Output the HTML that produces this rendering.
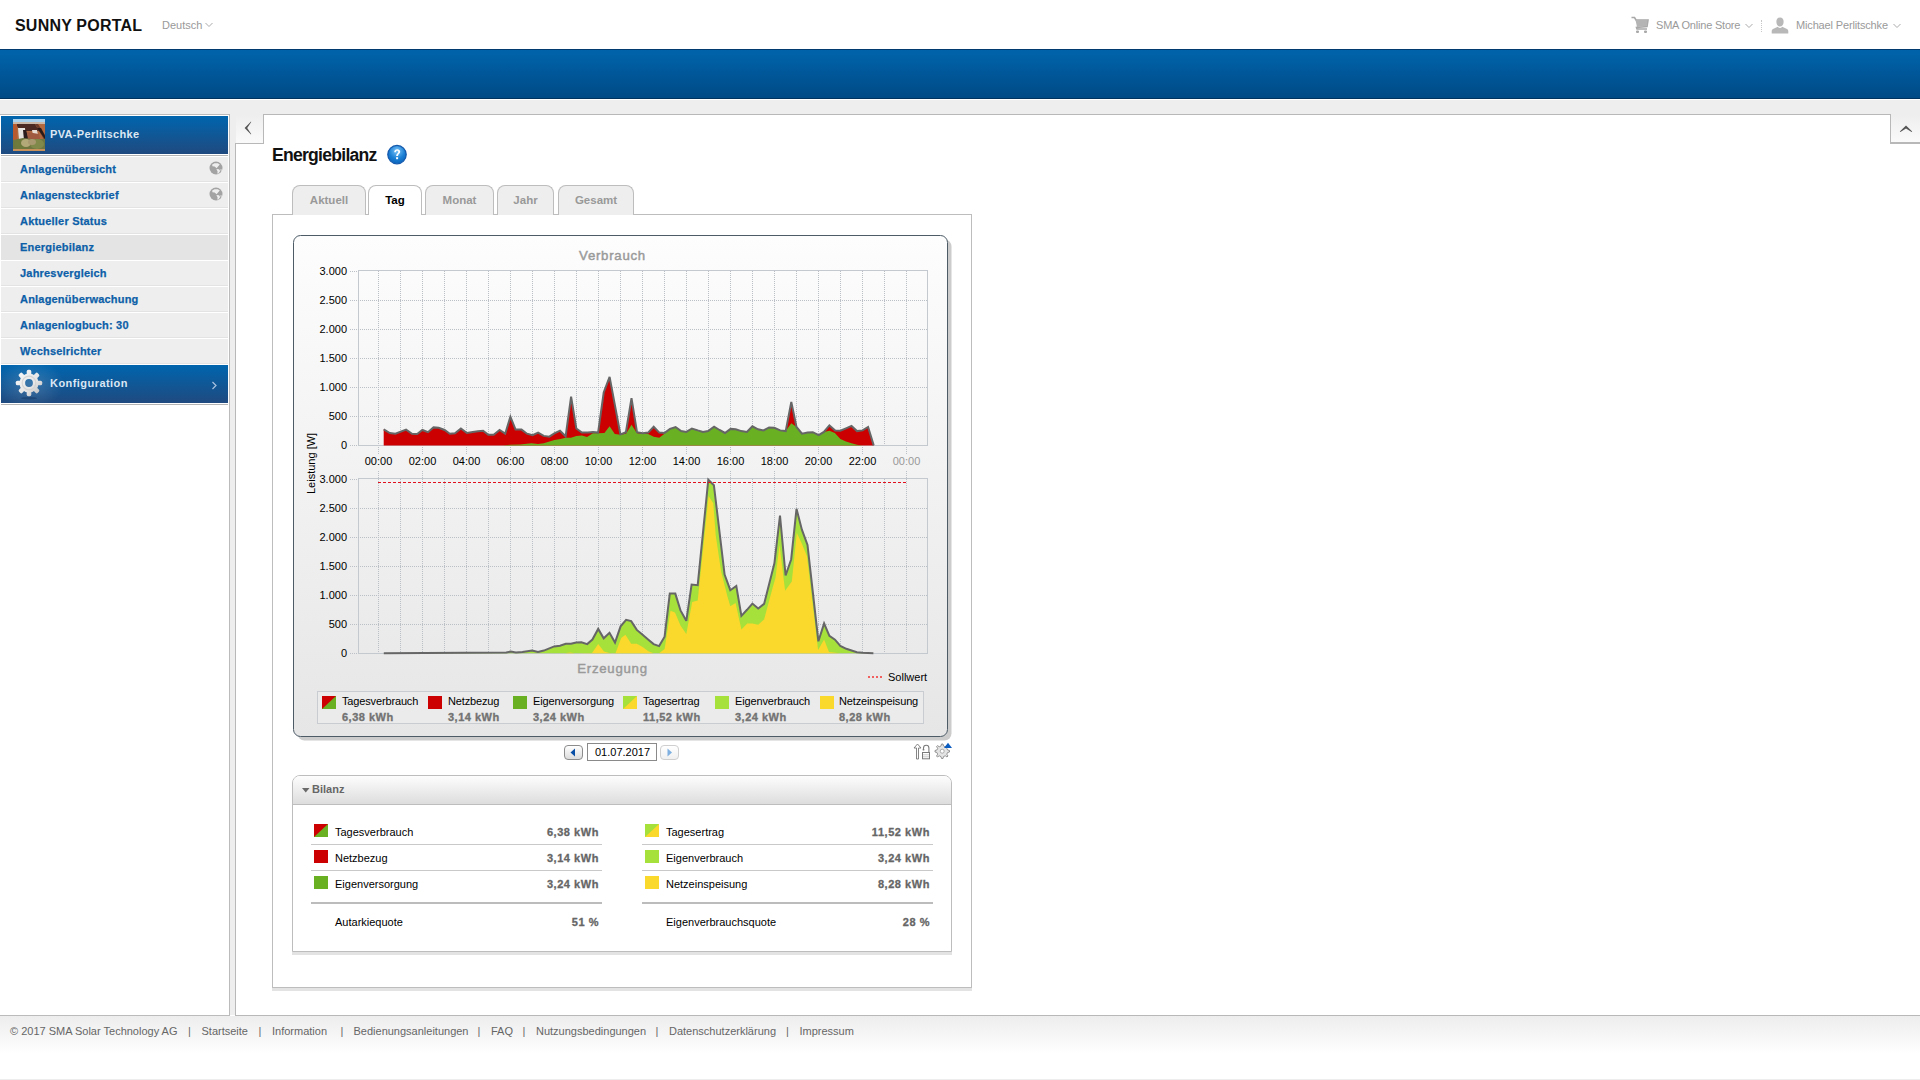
<!DOCTYPE html>
<html><head><meta charset="utf-8">
<style>
*{margin:0;padding:0;box-sizing:border-box}
html,body{width:1920px;height:1080px;overflow:hidden;background:#fff;font-family:"Liberation Sans",sans-serif;font-size:11px;color:#000}
.a{position:absolute;white-space:nowrap}
#hdr{position:absolute;left:0;top:0;width:1920px;height:49px;background:#fff}
#bluebar{position:absolute;left:0;top:49px;width:1920px;height:50px;background:linear-gradient(#0064ab,#004a86);border-top:1px solid #003a6e;border-bottom:1px solid #00325f}
#pagebg{position:absolute;left:0;top:99px;width:1920px;height:916px;background:#eeeeee;border-top:1px solid #fff}
#side{position:absolute;left:0;top:114px;width:230px;height:902px;background:#fff;border:1px solid #bbb;border-left:none}
.sbhead{position:absolute;left:1px;width:227px;background:linear-gradient(#0065ae,#1f4a7f)}
.item{position:absolute;left:1px;width:227px;height:25px;background:#eeeeee;border-bottom:1px solid #e3e3e3}
.item.sel{background:#e4e4e4;border-bottom-color:#e4e4e4}
.itxt{position:absolute;left:19px;top:6px;font-weight:bold;color:#0d5fa8;font-size:11px;letter-spacing:0.2px;-webkit-text-stroke:0.25px #0d5fa8}
.sep{position:absolute;left:1px;width:227px;height:1px;background:#b4b4b4}
#content{position:absolute;left:235px;top:143px;width:1685px;height:873px;background:#fff;border-left:1px solid #b8b8b8;border-top:1px solid #b8b8b8;border-bottom:1px solid #b8b8b8}
#ctop{position:absolute;left:263px;top:114px;width:1628px;height:30px;background:#fff;border:1px solid #b8b8b8;border-bottom:none}
.tabbtn{position:absolute;background:linear-gradient(#eee,#fafafa)}
.tab{position:absolute;top:185px;height:30px;border:1px solid #bdbdbd;border-bottom:none;border-radius:8px 8px 0 0;background:#eeeeee;text-align:center;font-weight:bold;color:#999;font-size:11.5px;padding-top:8px}
.tab.act{background:#fff;color:#000;height:30px}
#footer{position:absolute;left:0;top:1016px;width:1920px;height:64px;background:linear-gradient(#ededed,#fff 38px);border-bottom:1px solid #ededed}
.ft{position:absolute;top:9px;color:#666;font-size:11px}
</style></head>
<body>
<div id="hdr">
  <div class="a" style="left:15px;top:17px;font-size:16px;font-weight:bold;color:#111;letter-spacing:0.2px">SUNNY PORTAL</div>
  <div class="a" style="left:162px;top:19px;font-size:11px;color:#999">Deutsch</div>
  <svg class="a" style="left:205px;top:22px" width="8" height="6"><path d="M0.5 1 L4 4.5 L7.5 1" fill="none" stroke="#aaa" stroke-width="1"/></svg>
  <svg class="a" style="left:1631px;top:16px" width="18" height="18" viewBox="0 0 18 18">
    <path d="M0.5 1.5 L3.5 1.5 L5 4 L17 4 L16 10.5 L5.5 11.5 L6 13 L16 13" fill="none" stroke="#a8a8a8" stroke-width="1.6"/>
    <path d="M4.5 4 L16.5 4 L15.8 10 L6 11 Z" fill="#b4b4b4"/>
    <rect x="5" y="14.5" width="3" height="2.5" rx="1" fill="#a8a8a8"/><rect x="13" y="14.5" width="3" height="2.5" rx="1" fill="#a8a8a8"/>
  </svg>
  <div class="a" style="left:1656px;top:19px;font-size:11px;color:#9a9a9a;letter-spacing:-0.2px">SMA Online Store</div>
  <svg class="a" style="left:1745px;top:23px" width="8" height="6"><path d="M0.5 1 L4 4.5 L7.5 1" fill="none" stroke="#aaa" stroke-width="1"/></svg>
  <div class="a" style="left:1761px;top:20px;width:1px;height:12px;border-left:1px dotted #c8c8c8"></div>
  <svg class="a" style="left:1771px;top:17px" width="18" height="17" viewBox="0 0 18 17">
    <path d="M9 0.5 C11.8 0.5 12.8 2.8 12.6 5.2 C12.4 7.6 11.2 9.6 9 9.6 C6.8 9.6 5.6 7.6 5.4 5.2 C5.2 2.8 6.2 0.5 9 0.5 Z M6.8 9.8 C7.4 10.6 8.2 11 9 11 C9.8 11 10.6 10.6 11.2 9.8 L16 12 C17 12.5 17.3 13.5 17.3 14.5 L17.3 16.5 L0.7 16.5 L0.7 14.5 C0.7 13.5 1 12.5 2 12 Z" fill="#b8b8b8"/>
  </svg>
  <div class="a" style="left:1796px;top:19px;font-size:11px;color:#9a9a9a;letter-spacing:-0.15px">Michael Perlitschke</div>
  <svg class="a" style="left:1893px;top:23px" width="8" height="6"><path d="M0.5 1 L4 4.5 L7.5 1" fill="none" stroke="#aaa" stroke-width="1"/></svg>
</div>
<div id="bluebar"></div>
<div id="pagebg"></div>

<!-- sidebar -->
<div id="side"></div>
<div class="sbhead" style="top:116px;height:38px"></div>
<div class="a" style="left:50px;top:128px;font-weight:bold;color:#dce7f3;font-size:11px;letter-spacing:0.35px">PVA-Perlitschke</div>
<div class="sep" style="top:155px"></div>

<div class="item" style="top:157px"><div class="itxt">Anlagenübersicht</div></div>
<div class="item" style="top:183px"><div class="itxt">Anlagensteckbrief</div></div>
<div class="item" style="top:209px"><div class="itxt">Aktueller Status</div></div>
<div class="item sel" style="top:235px"><div class="itxt">Energiebilanz</div></div>
<div class="item" style="top:261px"><div class="itxt">Jahresvergleich</div></div>
<div class="item" style="top:287px"><div class="itxt">Anlagenüberwachung</div></div>
<div class="item" style="top:313px"><div class="itxt">Anlagenlogbuch: 30</div></div>
<div class="item" style="top:339px"><div class="itxt">Wechselrichter</div></div>
<div class="sbhead" style="top:365px;height:38px"></div>
<div class="a" style="left:50px;top:376.5px;font-weight:bold;color:#dae6f3;font-size:11px;letter-spacing:0.45px">Konfiguration</div>
<div class="sep" style="top:404px"></div>

<!-- content -->
<div id="content"></div>
<div id="ctop"></div>
<div class="tabbtn" style="left:236px;top:115px;width:27px;height:28px"></div>
<div class="tabbtn" style="left:1891px;top:115px;width:29px;height:28px;border-bottom:1px solid #b8b8b8"></div>

<div class="a" style="left:272px;top:144.5px;font-size:17.6px;font-weight:bold;color:#111;letter-spacing:-0.75px">Energiebilanz</div>

<!-- tabs -->
<div style="position:absolute;left:272px;top:214px;width:700px;height:774px;border:1px solid #bdbdbd;background:#fff;box-shadow:0 3px 0 #e3e3e3"></div>
<div class="tab" style="left:292px;width:74px">Aktuell</div>
<div class="tab act" style="left:368px;width:54px">Tag</div>
<div class="tab" style="left:425px;width:69px">Monat</div>
<div class="tab" style="left:497px;width:57px">Jahr</div>
<div class="tab" style="left:558px;width:76px">Gesamt</div>
<div style="position:absolute;left:369px;top:214px;width:52px;height:1px;background:#fff"></div>


<!-- house thumb -->
<svg class="a" style="left:13px;top:119px" width="32" height="32" viewBox="0 0 32 32">
<rect width="32" height="32" fill="#b0683e"/>
<rect width="32" height="4" fill="#a9d2ee"/>
<rect y="3" width="32" height="2" fill="#c9b8a8"/>
<polygon points="3,5 22,5 26,12 7,12" fill="#4a2a22"/>
<polygon points="22,5 25,5 32,16 32,22" fill="#6a3a2a"/>
<polygon points="24,9 28,9 32,17 32,20" fill="#2a1a18"/>
<polygon points="5,9 12,9 13,20 6,21" fill="#e6e2de"/>
<polygon points="10,11 13,11 16,21 11,21" fill="#2a1c1c"/>
<polygon points="19,11 24,11 25,16 20,16" fill="#e8dcd2"/>
<polygon points="14,13 26,15 27,20 15,21" fill="#a05a40"/>
<rect x="0" y="5" width="4" height="18" fill="#b85a30"/>
<polygon points="0,21 10,19 20,20 32,20 32,31 0,31" fill="#6f7640"/>
<ellipse cx="8" cy="25" rx="7" ry="5" fill="#6d7a3c"/>
<ellipse cx="13" cy="24" rx="5" ry="4" fill="#b3a878"/>
<ellipse cx="24" cy="25" rx="7" ry="5" fill="#80884a"/>
<ellipse cx="19" cy="23" rx="4" ry="3" fill="#a89870"/>
<rect y="30" width="32" height="2" fill="#c8905a"/>
</svg>
<!-- globe icons -->
<svg class="a" style="left:209px;top:161px" width="14" height="14" viewBox="0 0 14 14"><circle cx="7" cy="7" r="6.5" fill="#a3a3a3"/><path d="M3.2 3.6 L5.5 2.2 L8.8 2.3 L10.8 3.6 L9.2 5.2 L7.6 7.3 L5.6 5.6 L3.4 5.3 Z M7.4 8 L10 8.2 L11.2 10 L9.2 12.8 L8.3 12.6 L8.6 10.6 Z M11.6 7.9 L12.7 8.6 L12.4 10.2 L11.6 9.6 Z" fill="#eeeeee"/></svg>
<svg class="a" style="left:209px;top:187px" width="14" height="14" viewBox="0 0 14 14"><circle cx="7" cy="7" r="6.5" fill="#a3a3a3"/><path d="M3.2 3.6 L5.5 2.2 L8.8 2.3 L10.8 3.6 L9.2 5.2 L7.6 7.3 L5.6 5.6 L3.4 5.3 Z M7.4 8 L10 8.2 L11.2 10 L9.2 12.8 L8.3 12.6 L8.6 10.6 Z M11.6 7.9 L12.7 8.6 L12.4 10.2 L11.6 9.6 Z" fill="#eeeeee"/></svg>
<!-- gear -->
<div style="position:absolute;left:1px;top:365px;width:70px;height:38px;background:radial-gradient(ellipse 34px 24px at 29px 19px,rgba(255,255,255,0.18),rgba(255,255,255,0) 100%)"></div>
<svg class="a" style="left:13px;top:367px" width="32" height="34" viewBox="-16 -16 32 34">
  <defs><linearGradient id="gg" x1="0" y1="0" x2="1" y2="1"><stop offset="0" stop-color="#ffffff"/><stop offset="0.6" stop-color="#e4e4e4"/><stop offset="1" stop-color="#a8a8a8"/></linearGradient>
  <mask id="gm"><g fill="#fff"><circle r="9.6"/><rect x="-2.3" y="-13.2" width="4.6" height="6" rx="1.6" transform="rotate(0)"/><rect x="-2.3" y="-13.2" width="4.6" height="6" rx="1.6" transform="rotate(45)"/><rect x="-2.3" y="-13.2" width="4.6" height="6" rx="1.6" transform="rotate(90)"/><rect x="-2.3" y="-13.2" width="4.6" height="6" rx="1.6" transform="rotate(135)"/><rect x="-2.3" y="-13.2" width="4.6" height="6" rx="1.6" transform="rotate(180)"/><rect x="-2.3" y="-13.2" width="4.6" height="6" rx="1.6" transform="rotate(225)"/><rect x="-2.3" y="-13.2" width="4.6" height="6" rx="1.6" transform="rotate(270)"/><rect x="-2.3" y="-13.2" width="4.6" height="6" rx="1.6" transform="rotate(315)"/></g><circle r="3.9" fill="#000"/></mask></defs>
  <ellipse cx="0" cy="15.2" rx="8" ry="1.3" fill="#0d3260" opacity="0.45"/>
  <rect x="-16" y="-16" width="32" height="32" fill="url(#gg)" mask="url(#gm)"/>
  <circle r="6.8" fill="none" stroke="#cfcfcf" stroke-width="1.2" opacity="0.8"/>
</svg>
<svg class="a" style="left:211px;top:381px" width="7" height="9"><path d="M1.5 1 L5 4.5 L1.5 8" fill="none" stroke="#a9c3e0" stroke-width="1.2"/></svg>
<!-- collapse chevrons -->
<svg class="a" style="left:243px;top:120px" width="10" height="16"><path d="M8 1.6 L1.6 8 L8 14.4 L8.2 13.9 L4.2 8 L8.2 2.1 Z" fill="#555"/></svg>
<svg class="a" style="left:1899px;top:124px" width="14" height="10"><path d="M0.8 7.6 L7 1.4 L13.2 7.6 L12.6 8 L7 4.4 L1.4 8 Z" fill="#555"/></svg>
<!-- help icon -->
<svg class="a" style="left:387px;top:144px" width="22" height="22" viewBox="0 0 22 22">
  <defs><radialGradient id="hg" cx="0.5" cy="0.3" r="0.7"><stop offset="0" stop-color="#7cc4f8"/><stop offset="0.6" stop-color="#1a7fd4"/><stop offset="1" stop-color="#0b63bb"/></radialGradient></defs>
  <circle cx="10" cy="10.6" r="9.2" fill="url(#hg)" stroke="#1559ad" stroke-width="1.3"/>
  <path d="M7.2 8.2 C7.2 6.2 8.6 5.2 10.2 5.2 C12 5.2 13.2 6.3 13.2 7.8 C13.2 9.6 11 10 11 12 L9.2 12 C9.2 9.4 11.3 9.2 11.3 7.9 C11.3 7.2 10.8 6.8 10.1 6.8 C9.3 6.8 8.9 7.4 8.9 8.2 Z" fill="#fff"/>
  <rect x="9.1" y="13.2" width="2" height="2" fill="#fff"/>
</svg>
<!-- date nav -->
<div style="position:absolute;left:564px;top:745px;width:19px;height:15px;border:1px solid #8c8c8c;border-radius:4px;background:linear-gradient(#fff,#dcdcdc)"></div>
<svg class="a" style="left:570px;top:748px" width="6" height="9"><path d="M5 0.5 L0.5 4.5 L5 8.5 Z" fill="#0a4fa6"/></svg>
<div style="position:absolute;left:587px;top:743px;width:70px;height:18px;border:1px solid #8a8a8a;background:#fff"></div>
<div class="a" style="left:595px;top:746px;font-size:11px;color:#000">01.07.2017</div>
<div style="position:absolute;left:660px;top:745px;width:19px;height:15px;border:1px solid #cfcfcf;border-radius:4px;background:linear-gradient(#fff,#f0f0f0)"></div>
<svg class="a" style="left:667px;top:748px" width="6" height="9"><path d="M0.5 0.5 L5 4.5 L0.5 8.5 Z" fill="#7fb0e0"/></svg>
<!-- export / settings icons -->
<svg class="a" style="left:912px;top:742px" width="42" height="19" viewBox="0 0 42 19">
  <path d="M5.5 2 L2 6 L4.5 6 L4.5 17 L6.5 17 L6.5 6 L9 6 Z" fill="#fff" stroke="#777" stroke-width="0.9"/>
  <path d="M11.5 8.2 L11.5 6 C11.5 4.2 12.6 3.2 14.2 3.2 C15.8 3.2 16.9 4.2 16.9 6 L16.9 11" fill="none" stroke="#7a7a7a" stroke-width="1.1"/><path d="M10.6 7.8 L12.4 7.8" stroke="#7a7a7a" stroke-width="1"/>
  <rect x="10.5" y="10.5" width="7" height="6.3" fill="#fff" stroke="#7a7a7a" stroke-width="1"/>
  <path d="M11 12.8 L17 12.8 M11 14.8 L17 14.8" stroke="#bbb" stroke-width="0.8"/>
  <path d="M29.5 2 L31 2 L31.5 4 L33.3 4.8 L35 3.6 L36 4.6 L34.8 6.3 L35.6 8 L37.5 8.5 L37.5 10 L35.6 10.5 L34.8 12.2 L36 14 L35 15 L33.3 13.8 L31.5 14.6 L31 16.5 L29.5 16.5 L29 14.6 L27.2 13.8 L25.5 15 L24.5 14 L25.7 12.2 L24.9 10.5 L23 10 L23 8.5 L24.9 8 L25.7 6.3 L24.5 4.6 L25.5 3.6 L27.2 4.8 L29 4 Z" fill="#e4e4e4" stroke="#8a8a8a" stroke-width="0.9"/>
  <circle cx="30.2" cy="9.2" r="2" fill="#fff" stroke="#999" stroke-width="0.8"/>
  <path d="M32 6 L36 0.8 L40 6 Z" fill="#0b5cc0"/>
</svg>
<div style="position:absolute;left:292px;top:775px;width:660px;height:177px;border:1px solid #bdbdbd;border-radius:8px 8px 0 0;background:#fff;box-shadow:0 3px 0 #e3e3e3"></div>
<div style="position:absolute;left:293px;top:776px;width:658px;height:29px;border-bottom:1px solid #bdbdbd;border-radius:7px 7px 0 0;background:linear-gradient(#fdfdfd,#dddddd)"></div>
<svg class="a" style="left:302px;top:788px" width="8" height="5"><path d="M0 0 L7.5 0 L3.75 4.5 Z" fill="#6a6a6a"/></svg>
<div class="a" style="left:312px;top:783px;font-weight:bold;font-size:11px;color:#666">Bilanz</div>
<svg class="a" style="left:314px;top:824px" width="14" height="13"><rect width="14" height="13" fill="#6ab023"/><polygon points="0,0 14,0 0,13" fill="#cc0000"/></svg>
<div class="a" style="left:335px;top:826px;font-size:11px;color:#000">Tagesverbrauch</div>
<div class="a" style="right:1321px;top:826px;font-size:11px;font-weight:bold;color:#666;letter-spacing:0.55px;-webkit-text-stroke:0.3px #666">6,38 kWh</div>
<div style="position:absolute;left:311px;top:844px;width:291px;height:1px;background:#c9c9c9"></div>
<div style="position:absolute;left:314px;top:850px;width:14px;height:13px;background:#cc0000"></div>
<div class="a" style="left:335px;top:852px;font-size:11px;color:#000">Netzbezug</div>
<div class="a" style="right:1321px;top:852px;font-size:11px;font-weight:bold;color:#666;letter-spacing:0.55px;-webkit-text-stroke:0.3px #666">3,14 kWh</div>
<div style="position:absolute;left:311px;top:870px;width:291px;height:1px;background:#c9c9c9"></div>
<div style="position:absolute;left:314px;top:876px;width:14px;height:13px;background:#6ab023"></div>
<div class="a" style="left:335px;top:878px;font-size:11px;color:#000">Eigenversorgung</div>
<div class="a" style="right:1321px;top:878px;font-size:11px;font-weight:bold;color:#666;letter-spacing:0.55px;-webkit-text-stroke:0.3px #666">3,24 kWh</div>
<div style="position:absolute;left:311px;top:902px;width:291px;height:2px;background:#bcbcbc"></div>
<div class="a" style="left:335px;top:916px;font-size:11px;color:#000">Autarkiequote</div>
<div class="a" style="right:1321px;top:916px;font-size:11px;font-weight:bold;color:#666;letter-spacing:0.55px;-webkit-text-stroke:0.3px #666">51 %</div>
<svg class="a" style="left:645px;top:824px" width="14" height="13"><rect width="14" height="13" fill="#fad82c"/><polygon points="0,0 14,0 0,13" fill="#a6e03a"/></svg>
<div class="a" style="left:666px;top:826px;font-size:11px;color:#000">Tagesertrag</div>
<div class="a" style="right:990px;top:826px;font-size:11px;font-weight:bold;color:#666;letter-spacing:0.55px;-webkit-text-stroke:0.3px #666">11,52 kWh</div>
<div style="position:absolute;left:642px;top:844px;width:291px;height:1px;background:#c9c9c9"></div>
<div style="position:absolute;left:645px;top:850px;width:14px;height:13px;background:#a6e03a"></div>
<div class="a" style="left:666px;top:852px;font-size:11px;color:#000">Eigenverbrauch</div>
<div class="a" style="right:990px;top:852px;font-size:11px;font-weight:bold;color:#666;letter-spacing:0.55px;-webkit-text-stroke:0.3px #666">3,24 kWh</div>
<div style="position:absolute;left:642px;top:870px;width:291px;height:1px;background:#c9c9c9"></div>
<div style="position:absolute;left:645px;top:876px;width:14px;height:13px;background:#fad82c"></div>
<div class="a" style="left:666px;top:878px;font-size:11px;color:#000">Netzeinspeisung</div>
<div class="a" style="right:990px;top:878px;font-size:11px;font-weight:bold;color:#666;letter-spacing:0.55px;-webkit-text-stroke:0.3px #666">8,28 kWh</div>
<div style="position:absolute;left:642px;top:902px;width:291px;height:2px;background:#bcbcbc"></div>
<div class="a" style="left:666px;top:916px;font-size:11px;color:#000">Eigenverbrauchsquote</div>
<div class="a" style="right:990px;top:916px;font-size:11px;font-weight:bold;color:#666;letter-spacing:0.55px;-webkit-text-stroke:0.3px #666">28 %</div>
<svg style="position:absolute;left:290px;top:230px" width="670" height="520" viewBox="290 230 670 520" font-family="Liberation Sans, sans-serif"><defs><linearGradient id="bx" x1="0" y1="0" x2="0" y2="1"><stop offset="0" stop-color="#fdfdfd"/><stop offset="1" stop-color="#e6e6e6"/></linearGradient><linearGradient id="ic1" x1="0" y1="1" x2="1" y2="0"><stop offset="0.5" stop-color="#cc0000"/><stop offset="0.5" stop-color="#6ab023"/></linearGradient></defs><rect x="297.5" y="239.5" width="654" height="501" rx="7" fill="#cccccc"/><rect x="293.5" y="235.5" width="654" height="501" rx="7" fill="url(#bx)" stroke="#4d5b67" stroke-width="1"/><rect x="358.5" y="270.5" width="569" height="175" fill="none" stroke="#c3c9cf" stroke-width="1"/><line x1="350" y1="445.5" x2="358" y2="445.5" stroke="#bac0c6" stroke-width="1" stroke-dasharray="1 1"/><line x1="350" y1="416.5" x2="927" y2="416.5" stroke="#bac0c6" stroke-width="1" stroke-dasharray="1 1"/><line x1="350" y1="387.5" x2="927" y2="387.5" stroke="#bac0c6" stroke-width="1" stroke-dasharray="1 1"/><line x1="350" y1="358.5" x2="927" y2="358.5" stroke="#bac0c6" stroke-width="1" stroke-dasharray="1 1"/><line x1="350" y1="329.5" x2="927" y2="329.5" stroke="#bac0c6" stroke-width="1" stroke-dasharray="1 1"/><line x1="350" y1="300.5" x2="927" y2="300.5" stroke="#bac0c6" stroke-width="1" stroke-dasharray="1 1"/><line x1="350" y1="271.5" x2="358" y2="271.5" stroke="#bac0c6" stroke-width="1" stroke-dasharray="1 1"/><line x1="378.5" y1="271" x2="378.5" y2="445" stroke="#bac0c6" stroke-width="1" stroke-dasharray="1 1"/><line x1="400.5" y1="271" x2="400.5" y2="445" stroke="#bac0c6" stroke-width="1" stroke-dasharray="1 1"/><line x1="422.5" y1="271" x2="422.5" y2="445" stroke="#bac0c6" stroke-width="1" stroke-dasharray="1 1"/><line x1="444.5" y1="271" x2="444.5" y2="445" stroke="#bac0c6" stroke-width="1" stroke-dasharray="1 1"/><line x1="466.5" y1="271" x2="466.5" y2="445" stroke="#bac0c6" stroke-width="1" stroke-dasharray="1 1"/><line x1="488.5" y1="271" x2="488.5" y2="445" stroke="#bac0c6" stroke-width="1" stroke-dasharray="1 1"/><line x1="510.5" y1="271" x2="510.5" y2="445" stroke="#bac0c6" stroke-width="1" stroke-dasharray="1 1"/><line x1="532.5" y1="271" x2="532.5" y2="445" stroke="#bac0c6" stroke-width="1" stroke-dasharray="1 1"/><line x1="554.5" y1="271" x2="554.5" y2="445" stroke="#bac0c6" stroke-width="1" stroke-dasharray="1 1"/><line x1="576.5" y1="271" x2="576.5" y2="445" stroke="#bac0c6" stroke-width="1" stroke-dasharray="1 1"/><line x1="598.5" y1="271" x2="598.5" y2="445" stroke="#bac0c6" stroke-width="1" stroke-dasharray="1 1"/><line x1="620.5" y1="271" x2="620.5" y2="445" stroke="#bac0c6" stroke-width="1" stroke-dasharray="1 1"/><line x1="642.5" y1="271" x2="642.5" y2="445" stroke="#bac0c6" stroke-width="1" stroke-dasharray="1 1"/><line x1="664.5" y1="271" x2="664.5" y2="445" stroke="#bac0c6" stroke-width="1" stroke-dasharray="1 1"/><line x1="686.5" y1="271" x2="686.5" y2="445" stroke="#bac0c6" stroke-width="1" stroke-dasharray="1 1"/><line x1="708.5" y1="271" x2="708.5" y2="445" stroke="#bac0c6" stroke-width="1" stroke-dasharray="1 1"/><line x1="730.5" y1="271" x2="730.5" y2="445" stroke="#bac0c6" stroke-width="1" stroke-dasharray="1 1"/><line x1="752.5" y1="271" x2="752.5" y2="445" stroke="#bac0c6" stroke-width="1" stroke-dasharray="1 1"/><line x1="774.5" y1="271" x2="774.5" y2="445" stroke="#bac0c6" stroke-width="1" stroke-dasharray="1 1"/><line x1="796.5" y1="271" x2="796.5" y2="445" stroke="#bac0c6" stroke-width="1" stroke-dasharray="1 1"/><line x1="818.5" y1="271" x2="818.5" y2="445" stroke="#bac0c6" stroke-width="1" stroke-dasharray="1 1"/><line x1="840.5" y1="271" x2="840.5" y2="445" stroke="#bac0c6" stroke-width="1" stroke-dasharray="1 1"/><line x1="862.5" y1="271" x2="862.5" y2="445" stroke="#bac0c6" stroke-width="1" stroke-dasharray="1 1"/><line x1="884.5" y1="271" x2="884.5" y2="445" stroke="#bac0c6" stroke-width="1" stroke-dasharray="1 1"/><line x1="906.5" y1="271" x2="906.5" y2="445" stroke="#bac0c6" stroke-width="1" stroke-dasharray="1 1"/><rect x="358.5" y="478.5" width="569" height="175" fill="none" stroke="#c3c9cf" stroke-width="1"/><line x1="350" y1="653.5" x2="358" y2="653.5" stroke="#bac0c6" stroke-width="1" stroke-dasharray="1 1"/><line x1="350" y1="624.5" x2="927" y2="624.5" stroke="#bac0c6" stroke-width="1" stroke-dasharray="1 1"/><line x1="350" y1="595.5" x2="927" y2="595.5" stroke="#bac0c6" stroke-width="1" stroke-dasharray="1 1"/><line x1="350" y1="566.5" x2="927" y2="566.5" stroke="#bac0c6" stroke-width="1" stroke-dasharray="1 1"/><line x1="350" y1="537.5" x2="927" y2="537.5" stroke="#bac0c6" stroke-width="1" stroke-dasharray="1 1"/><line x1="350" y1="508.5" x2="927" y2="508.5" stroke="#bac0c6" stroke-width="1" stroke-dasharray="1 1"/><line x1="350" y1="479.5" x2="358" y2="479.5" stroke="#bac0c6" stroke-width="1" stroke-dasharray="1 1"/><line x1="378.5" y1="479" x2="378.5" y2="653" stroke="#bac0c6" stroke-width="1" stroke-dasharray="1 1"/><line x1="400.5" y1="479" x2="400.5" y2="653" stroke="#bac0c6" stroke-width="1" stroke-dasharray="1 1"/><line x1="422.5" y1="479" x2="422.5" y2="653" stroke="#bac0c6" stroke-width="1" stroke-dasharray="1 1"/><line x1="444.5" y1="479" x2="444.5" y2="653" stroke="#bac0c6" stroke-width="1" stroke-dasharray="1 1"/><line x1="466.5" y1="479" x2="466.5" y2="653" stroke="#bac0c6" stroke-width="1" stroke-dasharray="1 1"/><line x1="488.5" y1="479" x2="488.5" y2="653" stroke="#bac0c6" stroke-width="1" stroke-dasharray="1 1"/><line x1="510.5" y1="479" x2="510.5" y2="653" stroke="#bac0c6" stroke-width="1" stroke-dasharray="1 1"/><line x1="532.5" y1="479" x2="532.5" y2="653" stroke="#bac0c6" stroke-width="1" stroke-dasharray="1 1"/><line x1="554.5" y1="479" x2="554.5" y2="653" stroke="#bac0c6" stroke-width="1" stroke-dasharray="1 1"/><line x1="576.5" y1="479" x2="576.5" y2="653" stroke="#bac0c6" stroke-width="1" stroke-dasharray="1 1"/><line x1="598.5" y1="479" x2="598.5" y2="653" stroke="#bac0c6" stroke-width="1" stroke-dasharray="1 1"/><line x1="620.5" y1="479" x2="620.5" y2="653" stroke="#bac0c6" stroke-width="1" stroke-dasharray="1 1"/><line x1="642.5" y1="479" x2="642.5" y2="653" stroke="#bac0c6" stroke-width="1" stroke-dasharray="1 1"/><line x1="664.5" y1="479" x2="664.5" y2="653" stroke="#bac0c6" stroke-width="1" stroke-dasharray="1 1"/><line x1="686.5" y1="479" x2="686.5" y2="653" stroke="#bac0c6" stroke-width="1" stroke-dasharray="1 1"/><line x1="708.5" y1="479" x2="708.5" y2="653" stroke="#bac0c6" stroke-width="1" stroke-dasharray="1 1"/><line x1="730.5" y1="479" x2="730.5" y2="653" stroke="#bac0c6" stroke-width="1" stroke-dasharray="1 1"/><line x1="752.5" y1="479" x2="752.5" y2="653" stroke="#bac0c6" stroke-width="1" stroke-dasharray="1 1"/><line x1="774.5" y1="479" x2="774.5" y2="653" stroke="#bac0c6" stroke-width="1" stroke-dasharray="1 1"/><line x1="796.5" y1="479" x2="796.5" y2="653" stroke="#bac0c6" stroke-width="1" stroke-dasharray="1 1"/><line x1="818.5" y1="479" x2="818.5" y2="653" stroke="#bac0c6" stroke-width="1" stroke-dasharray="1 1"/><line x1="840.5" y1="479" x2="840.5" y2="653" stroke="#bac0c6" stroke-width="1" stroke-dasharray="1 1"/><line x1="862.5" y1="479" x2="862.5" y2="653" stroke="#bac0c6" stroke-width="1" stroke-dasharray="1 1"/><line x1="884.5" y1="479" x2="884.5" y2="653" stroke="#bac0c6" stroke-width="1" stroke-dasharray="1 1"/><line x1="906.5" y1="479" x2="906.5" y2="653" stroke="#bac0c6" stroke-width="1" stroke-dasharray="1 1"/><line x1="378.5" y1="447" x2="378.5" y2="455" stroke="#bac0c6" stroke-dasharray="1 1"/><line x1="378.5" y1="471" x2="378.5" y2="479" stroke="#bac0c6" stroke-dasharray="1 1"/><line x1="422.5" y1="447" x2="422.5" y2="455" stroke="#bac0c6" stroke-dasharray="1 1"/><line x1="422.5" y1="471" x2="422.5" y2="479" stroke="#bac0c6" stroke-dasharray="1 1"/><line x1="466.5" y1="447" x2="466.5" y2="455" stroke="#bac0c6" stroke-dasharray="1 1"/><line x1="466.5" y1="471" x2="466.5" y2="479" stroke="#bac0c6" stroke-dasharray="1 1"/><line x1="510.5" y1="447" x2="510.5" y2="455" stroke="#bac0c6" stroke-dasharray="1 1"/><line x1="510.5" y1="471" x2="510.5" y2="479" stroke="#bac0c6" stroke-dasharray="1 1"/><line x1="554.5" y1="447" x2="554.5" y2="455" stroke="#bac0c6" stroke-dasharray="1 1"/><line x1="554.5" y1="471" x2="554.5" y2="479" stroke="#bac0c6" stroke-dasharray="1 1"/><line x1="598.5" y1="447" x2="598.5" y2="455" stroke="#bac0c6" stroke-dasharray="1 1"/><line x1="598.5" y1="471" x2="598.5" y2="479" stroke="#bac0c6" stroke-dasharray="1 1"/><line x1="642.5" y1="447" x2="642.5" y2="455" stroke="#bac0c6" stroke-dasharray="1 1"/><line x1="642.5" y1="471" x2="642.5" y2="479" stroke="#bac0c6" stroke-dasharray="1 1"/><line x1="686.5" y1="447" x2="686.5" y2="455" stroke="#bac0c6" stroke-dasharray="1 1"/><line x1="686.5" y1="471" x2="686.5" y2="479" stroke="#bac0c6" stroke-dasharray="1 1"/><line x1="730.5" y1="447" x2="730.5" y2="455" stroke="#bac0c6" stroke-dasharray="1 1"/><line x1="730.5" y1="471" x2="730.5" y2="479" stroke="#bac0c6" stroke-dasharray="1 1"/><line x1="774.5" y1="447" x2="774.5" y2="455" stroke="#bac0c6" stroke-dasharray="1 1"/><line x1="774.5" y1="471" x2="774.5" y2="479" stroke="#bac0c6" stroke-dasharray="1 1"/><line x1="818.5" y1="447" x2="818.5" y2="455" stroke="#bac0c6" stroke-dasharray="1 1"/><line x1="818.5" y1="471" x2="818.5" y2="479" stroke="#bac0c6" stroke-dasharray="1 1"/><line x1="862.5" y1="447" x2="862.5" y2="455" stroke="#bac0c6" stroke-dasharray="1 1"/><line x1="862.5" y1="471" x2="862.5" y2="479" stroke="#bac0c6" stroke-dasharray="1 1"/><line x1="906.5" y1="447" x2="906.5" y2="455" stroke="#bac0c6" stroke-dasharray="1 1"/><line x1="906.5" y1="471" x2="906.5" y2="479" stroke="#bac0c6" stroke-dasharray="1 1"/><polygon points="383.7,445.4 383.7,429.3 389.8,433.0 395.4,433.7 406.1,429.6 412.0,433.7 417.2,434.0 422.4,430.0 428.0,432.2 433.5,427.4 438.7,427.8 444.6,430.0 449.8,433.7 455.0,433.3 460.9,428.5 466.9,433.0 472.8,431.9 477.9,431.3 483.1,430.7 488.3,434.8 493.7,434.8 499.6,430.0 505.2,433.7 510.4,416.7 515.6,429.6 521.5,429.6 527.0,433.7 532.6,435.2 538.1,432.6 543.7,435.9 549.3,436.7 554.4,433.3 560.0,430.7 565.6,436.3 571.1,396.7 576.3,428.5 581.9,432.6 587.8,432.6 593.0,431.9 598.1,432.6 603.7,392.5 609.6,376.9 620.4,434.4 625.9,432.2 631.5,398.1 637.0,432.2 642.6,433.3 648.1,432.6 653.7,426.7 659.3,432.6 664.4,433.0 670.0,428.9 675.6,427.0 681.1,431.1 686.3,431.9 691.9,428.5 697.8,430.4 703.0,431.9 708.1,431.1 714.1,426.7 719.5,430.0 725.0,433.0 730.6,428.9 735.7,429.3 741.3,431.1 746.9,431.9 752.4,426.3 758.0,429.3 763.5,430.4 769.1,427.4 774.3,427.8 780.2,430.4 785.7,431.1 791.3,401.9 796.5,427.0 802.0,433.7 807.6,432.6 812.8,432.2 818.7,435.2 823.9,431.9 829.4,425.4 835.2,430.4 840.4,430.7 846.0,428.3 851.5,425.9 857.0,431.1 862.6,430.4 868.1,427.0 873.7,445.4" fill="#cc0000"/><polygon points="503.0,445.4 510.0,444.8 520.0,444.4 531.5,443.3 538.0,444.0 543.7,443.3 554.4,440.0 560.4,438.9 565.6,437.8 571.0,437.8 576.3,436.0 581.9,435.6 587.0,437.0 593.0,433.3 598.0,433.3 604.4,433.0 609.6,426.3 614.8,434.1 620.4,434.8 626.0,433.7 631.5,424.8 637.0,433.3 642.6,434.1 648.1,434.1 653.7,436.7 659.3,437.8 664.4,433.7 670.0,428.9 675.6,427.0 681.1,431.1 686.3,431.9 691.9,428.5 697.8,430.4 703.0,431.9 708.1,431.1 714.1,426.7 719.5,430.0 725.0,433.0 730.6,428.9 735.7,429.3 741.3,431.1 746.9,431.9 752.4,426.3 758.0,429.3 763.5,430.4 769.1,427.4 774.3,427.8 780.2,430.4 785.7,431.1 791.3,423.3 796.5,427.0 802.0,433.7 807.6,432.6 812.8,432.2 818.7,435.2 823.9,431.9 829.4,430.7 834.8,433.0 840.4,438.9 846.0,441.5 851.5,443.3 857.0,444.8 862.6,445.4" fill="#6ab023"/><polyline points="383.7,429.3 389.8,433.0 395.4,433.7 406.1,429.6 412.0,433.7 417.2,434.0 422.4,430.0 428.0,432.2 433.5,427.4 438.7,427.8 444.6,430.0 449.8,433.7 455.0,433.3 460.9,428.5 466.9,433.0 472.8,431.9 477.9,431.3 483.1,430.7 488.3,434.8 493.7,434.8 499.6,430.0 505.2,433.7 510.4,416.7 515.6,429.6 521.5,429.6 527.0,433.7 532.6,435.2 538.1,432.6 543.7,435.9 549.3,436.7 554.4,433.3 560.0,430.7 565.6,436.3 571.1,396.7 576.3,428.5 581.9,432.6 587.8,432.6 593.0,431.9 598.1,432.6 603.7,392.5 609.6,376.9 620.4,434.4 625.9,432.2 631.5,398.1 637.0,432.2 642.6,433.3 648.1,432.6 653.7,426.7 659.3,432.6 664.4,433.0 670.0,428.9 675.6,427.0 681.1,431.1 686.3,431.9 691.9,428.5 697.8,430.4 703.0,431.9 708.1,431.1 714.1,426.7 719.5,430.0 725.0,433.0 730.6,428.9 735.7,429.3 741.3,431.1 746.9,431.9 752.4,426.3 758.0,429.3 763.5,430.4 769.1,427.4 774.3,427.8 780.2,430.4 785.7,431.1 791.3,401.9 796.5,427.0 802.0,433.7 807.6,432.6 812.8,432.2 818.7,435.2 823.9,431.9 829.4,425.4 835.2,430.4 840.4,430.7 846.0,428.3 851.5,425.9 857.0,431.1 862.6,430.4 868.1,427.0 873.7,445.4" fill="none" stroke="#666" stroke-width="2" stroke-linejoin="miter" stroke-miterlimit="3"/><polygon points="383.8,653.2 506.2,652.5 510.7,651.6 515.9,652.5 522.4,651.9 532.1,650.6 538.0,651.9 543.8,650.6 554.2,646.4 560.0,645.7 565.8,643.8 571.0,643.8 576.2,642.5 581.4,642.2 587.2,644.1 592.4,639.6 598.2,628.9 603.7,638.3 609.5,632.8 615.0,642.5 620.6,626.3 626.1,619.8 631.2,621.1 636.8,629.9 642.6,634.7 648.1,639.4 653.6,644.1 659.1,646.1 664.6,636.7 669.8,593.6 675.3,593.6 680.5,610.4 686.3,620.8 691.6,584.6 697.7,585.2 708.3,479.7 713.9,485.2 724.6,574.5 730.3,590.2 736.3,586.0 741.4,615.9 747.0,609.8 752.4,603.6 758.2,608.5 764.1,603.9 774.4,563.3 780.0,515.5 785.6,575.5 791.2,559.2 796.5,508.8 801.9,529.7 807.5,545.0 818.4,641.3 824.1,623.4 829.4,635.9 835.0,639.7 840.3,645.9 846.3,648.8 856.9,652.2 862.5,652.8 873.4,653.2 873.4,653.2" fill="#a6e03a"/><polygon points="565.0,653.2 570.0,652.6 575.0,653.2 592.0,653.0 598.2,644.1 604.0,651.6 609.5,653.0 615.4,653.4 621.2,638.0 625.4,634.7 631.2,643.8 636.8,643.8 642.6,647.0 648.4,651.2 653.6,653.2 659.1,653.2 664.6,649.0 670.5,610.7 675.0,612.4 680.5,625.6 686.3,634.0 692.2,602.0 697.7,600.5 708.6,496.0 713.3,503.3 715.7,535.0 721.1,571.4 727.2,595.5 730.3,606.2 735.6,603.0 741.4,629.5 747.2,623.4 752.4,623.4 758.2,624.7 764.1,619.5 770.4,596.0 775.5,577.6 779.5,545.0 785.1,590.8 791.8,581.6 796.8,532.8 802.0,544.0 807.0,556.2 818.1,650.0 824.1,639.4 829.0,651.9 840.0,653.2" fill="#fad82c"/><polyline points="383.8,653.2 506.2,652.5 510.7,651.6 515.9,652.5 522.4,651.9 532.1,650.6 538.0,651.9 543.8,650.6 554.2,646.4 560.0,645.7 565.8,643.8 571.0,643.8 576.2,642.5 581.4,642.2 587.2,644.1 592.4,639.6 598.2,628.9 603.7,638.3 609.5,632.8 615.0,642.5 620.6,626.3 626.1,619.8 631.2,621.1 636.8,629.9 642.6,634.7 648.1,639.4 653.6,644.1 659.1,646.1 664.6,636.7 669.8,593.6 675.3,593.6 680.5,610.4 686.3,620.8 691.6,584.6 697.7,585.2 708.3,479.7 713.9,485.2 724.6,574.5 730.3,590.2 736.3,586.0 741.4,615.9 747.0,609.8 752.4,603.6 758.2,608.5 764.1,603.9 774.4,563.3 780.0,515.5 785.6,575.5 791.2,559.2 796.5,508.8 801.9,529.7 807.5,545.0 818.4,641.3 824.1,623.4 829.4,635.9 835.0,639.7 840.3,645.9 846.3,648.8 856.9,652.2 862.5,652.8 873.4,653.2" fill="none" stroke="#666" stroke-width="2" stroke-linejoin="miter" stroke-miterlimit="3"/><line x1="378" y1="482.5" x2="906" y2="482.5" stroke="#e0101c" stroke-width="1" stroke-dasharray="3 2"/><text x="347" y="275.0" text-anchor="end" font-size="11" fill="#000">3.000</text><text x="347" y="304.1" text-anchor="end" font-size="11" fill="#000">2.500</text><text x="347" y="333.1" text-anchor="end" font-size="11" fill="#000">2.000</text><text x="347" y="362.2" text-anchor="end" font-size="11" fill="#000">1.500</text><text x="347" y="391.3" text-anchor="end" font-size="11" fill="#000">1.000</text><text x="347" y="420.3" text-anchor="end" font-size="11" fill="#000">500</text><text x="347" y="449.4" text-anchor="end" font-size="11" fill="#000">0</text><text x="347" y="483.0" text-anchor="end" font-size="11" fill="#000">3.000</text><text x="347" y="512.0" text-anchor="end" font-size="11" fill="#000">2.500</text><text x="347" y="541.1" text-anchor="end" font-size="11" fill="#000">2.000</text><text x="347" y="570.1" text-anchor="end" font-size="11" fill="#000">1.500</text><text x="347" y="599.1" text-anchor="end" font-size="11" fill="#000">1.000</text><text x="347" y="628.2" text-anchor="end" font-size="11" fill="#000">500</text><text x="347" y="657.2" text-anchor="end" font-size="11" fill="#000">0</text><text x="378.5" y="465" text-anchor="middle" font-size="11" fill="#000">00:00</text><text x="422.5" y="465" text-anchor="middle" font-size="11" fill="#000">02:00</text><text x="466.5" y="465" text-anchor="middle" font-size="11" fill="#000">04:00</text><text x="510.5" y="465" text-anchor="middle" font-size="11" fill="#000">06:00</text><text x="554.5" y="465" text-anchor="middle" font-size="11" fill="#000">08:00</text><text x="598.5" y="465" text-anchor="middle" font-size="11" fill="#000">10:00</text><text x="642.5" y="465" text-anchor="middle" font-size="11" fill="#000">12:00</text><text x="686.5" y="465" text-anchor="middle" font-size="11" fill="#000">14:00</text><text x="730.5" y="465" text-anchor="middle" font-size="11" fill="#000">16:00</text><text x="774.5" y="465" text-anchor="middle" font-size="11" fill="#000">18:00</text><text x="818.5" y="465" text-anchor="middle" font-size="11" fill="#000">20:00</text><text x="862.5" y="465" text-anchor="middle" font-size="11" fill="#000">22:00</text><text x="906.5" y="465" text-anchor="middle" font-size="11" fill="#999">00:00</text><text transform="translate(315,494) rotate(-90)" font-size="11" fill="#000">Leistung [W]</text><text x="612.5" y="260" text-anchor="middle" font-size="13.2" fill="#9a9a9a" stroke="#9a9a9a" stroke-width="0.45" letter-spacing="0.75">Verbrauch</text><text x="612.5" y="673" text-anchor="middle" font-size="13.2" fill="#9a9a9a" stroke="#9a9a9a" stroke-width="0.45" letter-spacing="0.75">Erzeugung</text><line x1="868" y1="677" x2="882" y2="677" stroke="#f25f5f" stroke-width="2" stroke-dasharray="2 2"/><text x="888" y="681" font-size="11" fill="#000">Sollwert</text><rect x="317.5" y="691.5" width="606" height="32" fill="#ebebeb" stroke="#c9cdd1"/><rect x="322" y="696" width="14" height="13" fill="#6ab023"/><polygon points="322,696 336,696 322,709" fill="#cc0000"/><text x="342" y="705" font-size="11" fill="#000" letter-spacing="-0.15">Tagesverbrauch</text><text x="342" y="721" font-size="11" font-weight="bold" fill="#737373" stroke="#737373" stroke-width="0.35" letter-spacing="0.5">6,38 kWh</text><rect x="428" y="696" width="14" height="13" fill="#cc0000"/><text x="448" y="705" font-size="11" fill="#000" letter-spacing="-0.15">Netzbezug</text><text x="448" y="721" font-size="11" font-weight="bold" fill="#737373" stroke="#737373" stroke-width="0.35" letter-spacing="0.5">3,14 kWh</text><rect x="513" y="696" width="14" height="13" fill="#6ab023"/><text x="533" y="705" font-size="11" fill="#000" letter-spacing="-0.15">Eigenversorgung</text><text x="533" y="721" font-size="11" font-weight="bold" fill="#737373" stroke="#737373" stroke-width="0.35" letter-spacing="0.5">3,24 kWh</text><rect x="623" y="696" width="14" height="13" fill="#fad82c"/><polygon points="623,696 637,696 623,709" fill="#a6e03a"/><text x="643" y="705" font-size="11" fill="#000" letter-spacing="-0.15">Tagesertrag</text><text x="643" y="721" font-size="11" font-weight="bold" fill="#737373" stroke="#737373" stroke-width="0.35" letter-spacing="0.5">11,52 kWh</text><rect x="715" y="696" width="14" height="13" fill="#a6e03a"/><text x="735" y="705" font-size="11" fill="#000" letter-spacing="-0.15">Eigenverbrauch</text><text x="735" y="721" font-size="11" font-weight="bold" fill="#737373" stroke="#737373" stroke-width="0.35" letter-spacing="0.5">3,24 kWh</text><rect x="820" y="696" width="14" height="13" fill="#fad82c"/><text x="839" y="705" font-size="11" fill="#000" letter-spacing="-0.15">Netzeinspeisung</text><text x="839" y="721" font-size="11" font-weight="bold" fill="#737373" stroke="#737373" stroke-width="0.35" letter-spacing="0.5">8,28 kWh</text></svg>
<!-- footer -->
<div id="footer"><div class="ft" style="left:10px">© 2017 SMA Solar Technology AG</div><div class="ft" style="left:188px">|</div><div class="ft" style="left:201.5px">Startseite</div><div class="ft" style="left:258.5px">|</div><div class="ft" style="left:272px">Information</div><div class="ft" style="left:340.5px">|</div><div class="ft" style="left:353.5px">Bedienungsanleitungen</div><div class="ft" style="left:477.5px">|</div><div class="ft" style="left:491px">FAQ</div><div class="ft" style="left:522.5px">|</div><div class="ft" style="left:536px">Nutzungsbedingungen</div><div class="ft" style="left:655.5px">|</div><div class="ft" style="left:669px">Datenschutzerklärung</div><div class="ft" style="left:786px">|</div><div class="ft" style="left:799.5px">Impressum</div></div>
</body></html>
